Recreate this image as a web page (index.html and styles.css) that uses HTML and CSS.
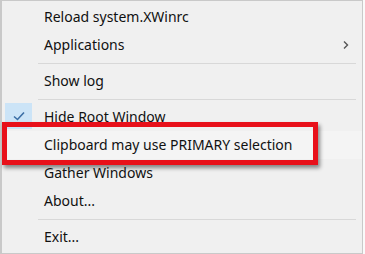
FILE: index.html
```html
<!DOCTYPE html>
<html lang="en">
<head>
    <meta charset="UTF-8">
    <meta name="viewport" content="width=device-width, initial-scale=1.0">
    <title>XWin menu</title>
    <link rel="stylesheet" href="styles.css">
</head>
<body>
    <div class="menu">
        <div class="item">Reload system.XWinrc</div>
        <div class="item">
            Applications
            <svg class="arrow" width="8" height="10" viewBox="0 0 8 10">
                <path d="M2 1.5 L5.5 5 L2 8.5" fill="none" stroke="#555" stroke-width="1.4"/>
            </svg>
        </div>
        <div class="separator"></div>
        <div class="item">Show log</div>
        <div class="separator"></div>
        <div class="item">
            <span class="check">
                <svg width="14" height="12" viewBox="0 0 14 12">
                    <path d="M2 6.5 L5.5 9.5 L12 2.5" fill="none" stroke="#3b6ea5" stroke-width="1.6"/>
                </svg>
            </span>
            Hide Root Window
        </div>
        <div class="item highlighted">
            Clipboard may use PRIMARY selection
            <span class="callout"></span>
        </div>
        <div class="item">Gather Windows</div>
        <div class="item">About...</div>
        <div class="separator"></div>
        <div class="item">Exit...</div>
    </div>
</body>
</html>
```

FILE: styles.css
```css
body {
    margin: 0;
    background-color: #fafafa;
    font-family: "Noto Sans", "Open Sans", sans-serif;
}

.menu {
    width: 360px;
    height: 250px;
    padding-top: 2px;
    background-color: #f0f0f0;
    border: 1px solid #c9c9c9;
    border-left-width: 2px;
}

.item {
    position: relative;
    height: 28px;
    line-height: 28px;
    padding-left: 42px;
    font-size: 14px;
    color: #111;
    display: flex;
    align-items: center;
}

.arrow {
    position: absolute;
    right: 12px;
    top: 9px;
}

.separator {
    height: 1px;
    margin: 4px 6px 3px 36px;
    background-color: #d8d8d8;
}

.check {
    position: absolute;
    left: 3px;
    top: 0;
    width: 27px;
    height: 26px;
    background-color: #cce4f7;
    display: flex;
    align-items: center;
    justify-content: center;
}

.highlighted {
    background-color: #f4f4f4;
}

.callout {
    position: absolute;
    left: 0;
    top: -9px;
    width: 306px;
    height: 33px;
    border: 5px solid #e8101a;
    box-shadow: 2px 3px 4px rgba(0, 0, 0, 0.45);
}
```
